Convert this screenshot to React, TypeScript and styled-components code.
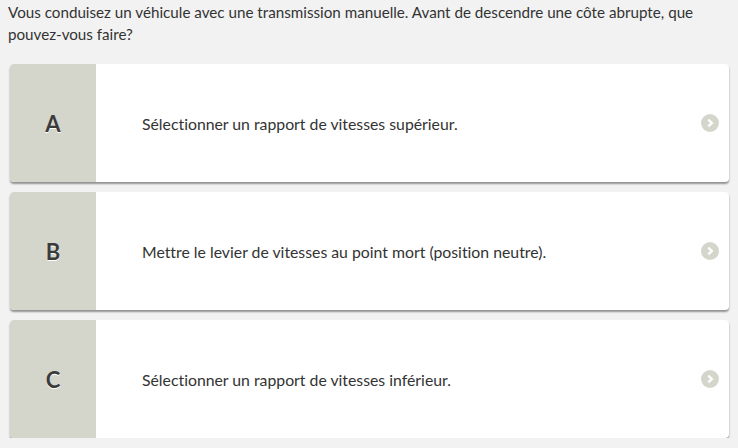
import styled, { createGlobalStyle } from "styled-components";

const GlobalStyle = createGlobalStyle`
  html, body {
    margin: 0;
    padding: 0;
    background: #f2f2f2;
  }
  body {
    font-family: Lato, "Open Sans", sans-serif;
    font-variant-ligatures: none;
    color: #333333;
  }
`;

const Page = styled.div`
  display: flex;
  flex-direction: column;
  padding: 1px 9px 0 10px;
`;

const Question = styled.p`
  margin: 0 0 19px -2px;
  font-size: 15.2px;
  line-height: 22px;
  color: #333333;
`;

const Answers = styled.ul`
  list-style: none;
  margin: 0;
  padding: 0;
  display: flex;
  flex-direction: column;
  gap: 10px;
`;

const Card = styled.li`
  display: flex;
  height: 118px;
  background: #ffffff;
  border-radius: 4px;
  overflow: hidden;
  box-shadow: 0 2px 2px rgba(0, 0, 0, 0.4);
  cursor: pointer;
`;

const Letter = styled.div`
  width: 86px;
  flex-shrink: 0;
  display: flex;
  align-items: center;
  justify-content: center;
  background: #d4d6cc;
  font-size: 22px;
  font-weight: 700;
  color: #3b3b3b;
  text-shadow: 0 1px 0 #ffffff;
`;

const Label = styled.div`
  flex: 1;
  display: flex;
  align-items: center;
  padding-left: 46px;
  font-size: 15.8px;
  color: #333333;
`;

const Arrow = styled.div`
  width: 18px;
  display: flex;
  align-items: center;
  margin-right: 10px;
`;

const Chevron = () => (
  <svg width="18" height="18" viewBox="0 0 18 18">
    <circle cx="9" cy="9" r="9" fill="#d4d6cc" />
    <path d="M7.3 5.6 L10.8 9 L7.3 12.4" fill="none" stroke="#ffffff" strokeWidth="2.4" />
  </svg>
);

const answers = [
  { letter: "A", text: "Sélectionner un rapport de vitesses supérieur." },
  { letter: "B", text: "Mettre le levier de vitesses au point mort (position neutre)." },
  { letter: "C", text: "Sélectionner un rapport de vitesses inférieur." },
];

function App() {
  return (
    <>
      <GlobalStyle />
      <Page>
        <Question>
          Vous conduisez un véhicule avec une transmission manuelle. Avant de descendre une côte abrupte, que
          pouvez-vous faire?
        </Question>
        <Answers>
          {answers.map((a) => (
            <Card key={a.letter}>
              <Letter>{a.letter}</Letter>
              <Label>{a.text}</Label>
              <Arrow>
                <Chevron />
              </Arrow>
            </Card>
          ))}
        </Answers>
      </Page>
    </>
  );
}

export default App;
